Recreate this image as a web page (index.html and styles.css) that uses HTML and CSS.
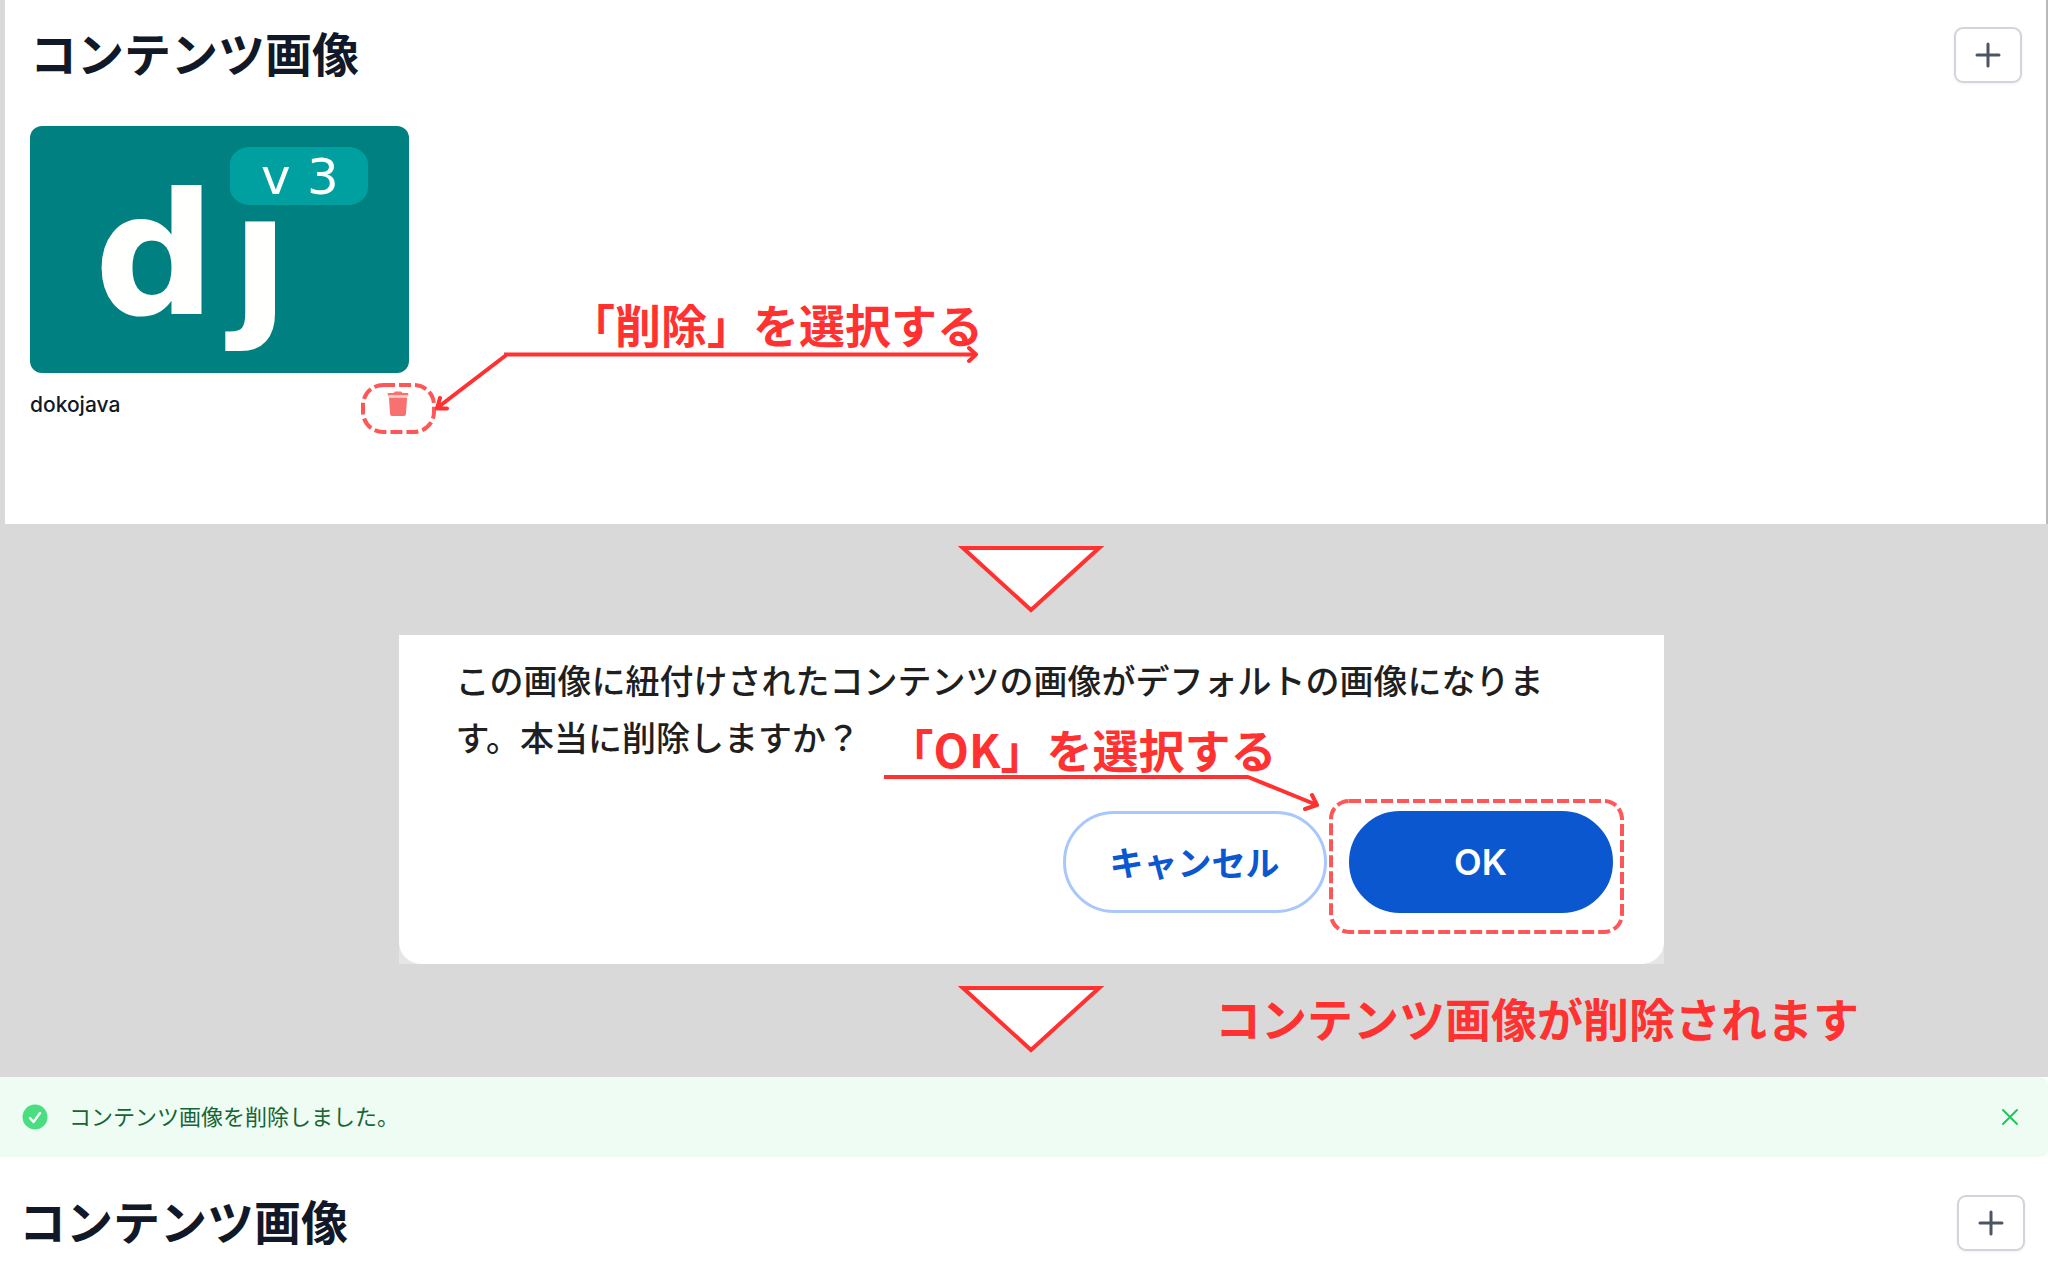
FILE: index.html
```html
<!DOCTYPE html>
<html lang="ja">
<head>
<meta charset="utf-8">
<meta name="viewport" content="width=device-width, initial-scale=1">
<title>コンテンツ画像</title>
<link rel="stylesheet" href="styles.css">
</head>
<body>
<main class="guide">
  <section class="panel panel-list">
    <header class="panel-header">
      <h1 class="title">コンテンツ画像</h1>
      <button class="add-button" type="button" aria-label="追加">
        <svg width="28" height="28" viewBox="0 0 28 28" fill="none" stroke="currentColor" stroke-width="3" stroke-linecap="round"><path d="M14 3v22M3 14h22"/></svg>
      </button>
    </header>
    <article class="card">
      <svg class="card-image" viewBox="0 0 379 247" role="img" aria-label="dokojava">
        <rect width="379" height="247" rx="12" fill="#008080"/>
        <rect x="200" y="21" width="138" height="58" rx="20" ry="17" fill="#00a0a0"/>
        <text class="logo-letter" x="64" y="188">d</text>
        <text class="logo-letter" x="201" y="188">ȷ</text>
        <text class="logo-version" x="231" y="68">v</text>
        <text class="logo-version" x="277" y="68">3</text>
      </svg>
      <div class="card-footer">
        <span class="card-name">dokojava</span>
        <button class="delete-button" type="button" aria-label="削除">
          <svg width="22" height="26" viewBox="0 0 22 26" fill="#f87171"><path d="M1.500 2H6.500L8 .5h6L15.500 2h5q.8 0 .8.8V4H.7V2.800Q.7 2 1.500 2z"/><path d="M.7 4h20.600v1.800H.7z" opacity=".45"/><path d="M2 6.500h18l-1 16.500q-.2 2-2 2H5q-1.800 0-2-2z"/></svg>
        </button>
      </div>
      <svg class="callout callout-delete" width="640" height="140" viewBox="0 0 640 140" fill="none" aria-hidden="true">
        <rect x="3" y="42" width="71" height="47" rx="20" stroke="#ff5757" stroke-width="4" stroke-dasharray="12 4"/>
        <path class="arrow" d="M616 11.500H144"/>
        <path class="arrow arrow-end" d="M609 5l7 6.500l-7 6.500M145 13L77 65M80 55l-3 10.500h10"/>
      </svg>
      <p class="note note-delete">「削除」を選択する</p>
    </article>
  </section>

  <section class="steps">
    <svg class="step-arrow" width="146" height="68" viewBox="0 0 146 68" aria-hidden="true"><path d="M5 3H141L73 65z" fill="#fff" stroke="#ff3131" stroke-width="4"/></svg>
    <div class="dialog" role="dialog" aria-labelledby="dialog-text">
      <div class="dialog-body">
        <p class="dialog-text" id="dialog-text">この画像に紐付けされたコンテンツの画像がデフォルトの画像になります。本当に削除しますか？</p>
        <div class="dialog-actions">
          <button class="pill pill-outline" type="button">キャンセル</button>
          <button class="pill pill-solid" type="button">OK</button>
        </div>
      </div>
      <svg class="callout callout-ok" width="750" height="170" viewBox="0 0 750 170" fill="none" aria-hidden="true">
        <rect x="453" y="32" width="291" height="131" rx="18" stroke="#ff5757" stroke-width="4" stroke-dasharray="12 4"/>
        <path class="arrow" d="M6 8H370"/>
        <path class="arrow arrow-end" d="M370 8L439 36M434 26l5 10l-12 4"/>
      </svg>
      <p class="note note-ok">「OK」を選択する</p>
    </div>
    <div class="result-row">
      <svg class="step-arrow result-arrow" width="146" height="68" viewBox="0 0 146 68" aria-hidden="true"><path d="M5 3H141L73 65z" fill="#fff" stroke="#ff3131" stroke-width="4"/></svg>
      <p class="note result-note">コンテンツ画像が削除されます</p>
    </div>
  </section>

  <section class="panel-result">
    <div class="alert" role="status">
      <svg width="26" height="26" viewBox="0 0 26 26" fill="none"><circle cx="13" cy="13" r="12.500" fill="#4ade80"/><path d="M8 14l3.500 4L18 9" stroke="#fff" stroke-width="2.400" stroke-linecap="round" stroke-linejoin="round"/></svg>
      <span class="alert-text">コンテンツ画像を削除しました。</span>
      <button class="close-button" type="button" aria-label="閉じる">
        <svg width="18" height="18" viewBox="0 0 18 18" fill="none" stroke="currentColor" stroke-width="2" stroke-linecap="round"><path d="M2 2l14 14M16 2L2 16"/></svg>
      </button>
    </div>
    <header class="panel-header">
      <h2 class="title">コンテンツ画像</h2>
      <button class="add-button" type="button" aria-label="追加">
        <svg width="28" height="28" viewBox="0 0 28 28" fill="none" stroke="currentColor" stroke-width="3" stroke-linecap="round"><path d="M14 3v22M3 14h22"/></svg>
      </button>
    </header>
  </section>
</main>
</body>
</html>
```
FILE: styles.css
```css
* {
  box-sizing: border-box;
}

body {
  margin: 0;
  background: #fff;
  color: #111827;
  font-family: Inter, "Noto Sans CJK JP", sans-serif;
}

h1,
h2,
p {
  margin: 0;
}

button {
  font: inherit;
  cursor: pointer;
}

svg {
  display: block;
  flex: none;
}

/* Image list */
.panel-list {
  padding: 27px 24px 105px 25px;
  border-left: 5px solid #d9d9d9;
  border-right: 2px solid #b8b8b8;
}

.panel-header {
  display: flex;
  align-items: flex-start;
  justify-content: space-between;
}

.title {
  font-family: "Noto Sans CJK JP", sans-serif;
  font-size: 47px;
  font-weight: 700;
  line-height: 50px;
}

.add-button {
  display: flex;
  align-items: center;
  justify-content: center;
  width: 68px;
  height: 56px;
  padding: 0;
  border: 2px solid #d1d5db;
  border-radius: 9px;
  background: #fff;
  color: #4b5563;
  box-shadow: 0 1px 3px rgba(0, 0, 0, 0.06);
}

.card {
  position: relative;
  width: 379px;
  margin-top: 43px;
}

.card-image {
  width: 100%;
  height: auto;
}

.logo-letter {
  fill: #fffffd;
  font-family: "DejaVu Sans", sans-serif;
  font-size: 170px;
  font-weight: 700;
}

.logo-version {
  fill: #fff;
  font-family: "DejaVu Sans", sans-serif;
  font-size: 50px;
}

.card-footer {
  display: flex;
  align-items: flex-start;
  justify-content: space-between;
  margin-top: 18px;
}

.card-name {
  font-size: 21px;
  font-weight: 500;
  line-height: 28px;
}

.delete-button {
  padding: 0;
  border: 0;
  background: none;
}

/* Red annotations */
.callout {
  position: absolute;
  pointer-events: none;
}

.arrow {
  stroke: #ff3131;
  stroke-width: 4;
}

.arrow-end {
  stroke-linecap: round;
  stroke-linejoin: round;
}

.note {
  color: #ff3131;
  font-family: "Noto Sans CJK JP", sans-serif;
  font-size: 46px;
  font-weight: 700;
  line-height: 56px;
  white-space: nowrap;
}

.callout-delete {
  top: 217px;
  left: 330px;
}

.note-delete {
  position: absolute;
  top: 169px;
  left: 539px;
}

/* Confirmation */
.steps {
  display: flex;
  flex-direction: column;
  align-items: center;
  padding: 21px 0 24px 14px;
  background: #d9d9d9;
}

.dialog {
  position: relative;
  width: 100%;
  max-width: 1265px;
  margin: 22px 0 21px;
  background: #e6e6e6;
}

.dialog-body {
  padding: 16px 51px 51px 57px;
  border-radius: 0 0 22px 22px;
  background: #fff;
}

.dialog-text {
  max-width: 1100px;
  color: #1f1f1f;
  font-family: "Noto Sans CJK JP", sans-serif;
  font-size: 34px;
  font-weight: 500;
  line-height: 57px;
}

.dialog-actions {
  display: flex;
  justify-content: flex-end;
  gap: 22px;
  margin-top: 46px;
}

.pill {
  width: 264px;
  height: 102px;
  padding: 0 0 2px;
  border: 3px solid #0b57d0;
  border-radius: 51px;
  font-family: Inter, "Noto Sans CJK JP", sans-serif;
  font-size: 34px;
  font-weight: 700;
}

.pill-outline {
  border-color: #a8c7fa;
  background: #fff;
  color: #0b57d0;
}

.pill-solid {
  padding: 0;
  background: #0b57d0;
  color: #fff;
  font-size: 36px;
  font-weight: 600;
}

.callout-ok {
  top: 134px;
  right: 36px;
}

.note-ok {
  position: absolute;
  top: 85px;
  right: 387px;
}

.result-row {
  display: grid;
  grid-template-columns: 1fr auto 1fr;
  align-items: start;
  width: 100%;
}

.result-arrow {
  grid-column: 2;
}

.result-note {
  margin: 4px 0 0 111px;
}

/* After deletion */
.alert {
  display: flex;
  align-items: center;
  height: 80px;
  padding: 0 29px 0 22px;
  border-radius: 0 8px 8px 0;
  background: #effcf4;
  color: #166534;
}

.alert-text {
  margin-left: 21px;
  padding-bottom: 4px;
  font-family: "Noto Sans CJK JP", sans-serif;
  font-size: 22px;
  line-height: 30px;
}

.close-button {
  margin-left: auto;
  padding: 0;
  border: 0;
  background: none;
  color: #22c55e;
}

.panel-result .panel-header {
  padding: 38px 23px 23px 19px;
}
```
